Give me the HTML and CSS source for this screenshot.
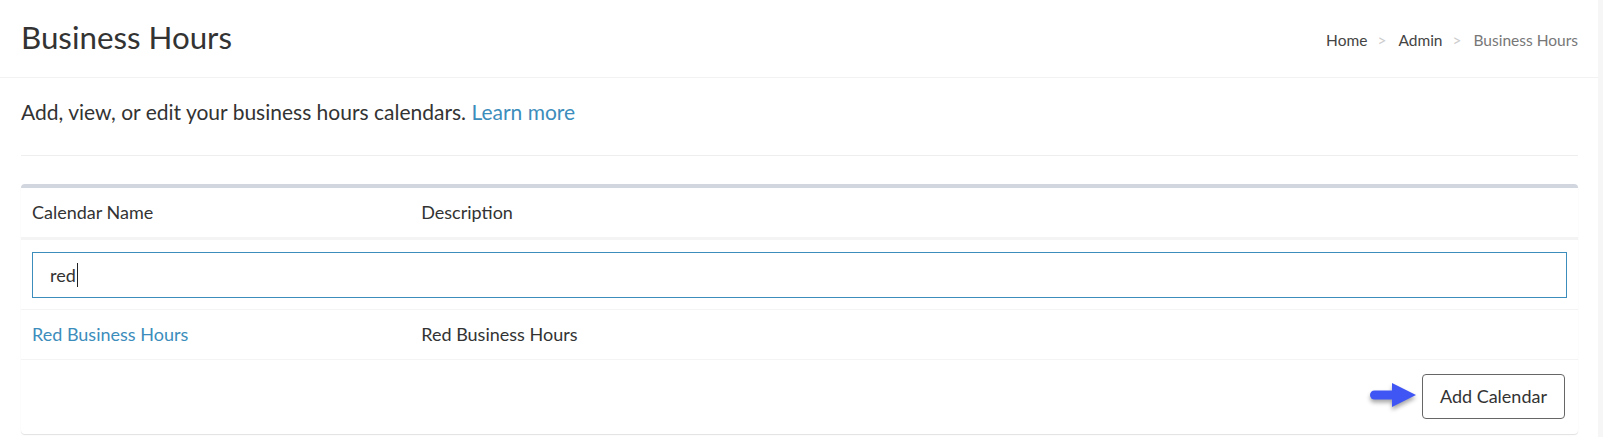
FILE: index.html
```html
<!DOCTYPE html>
<html lang="en">
<head>
<meta charset="utf-8">
<title>Business Hours</title>
<link rel="stylesheet" href="styles.css">
</head>
<body>
<div class="page">
  <div class="main">
    <header class="content-header">
      <h1 class="page-title">Business Hours</h1>
      <ol class="breadcrumb">
        <li class="crumb"><a href="#">Home</a></li>
        <li class="crumb sep-before"><a href="#">Admin</a></li>
        <li class="crumb sep-before active">Business Hours</li>
      </ol>
    </header>
    <section class="content">
      <p class="intro">Add, view, or edit your business hours calendars. <a class="link" href="#">Learn more</a></p>
      <hr class="divider">
      <div class="box">
        <div class="row head-row">
          <div class="cell">Calendar Name</div>
          <div class="cell">Description</div>
        </div>
        <div class="filter-row">
          <div class="fake-input" role="textbox" aria-label="Filter calendars"><span class="typed">red</span><span class="caret"></span></div>
        </div>
        <div class="row data-row">
          <div class="cell"><a class="link" href="#">Red Business Hours</a></div>
          <div class="cell">Red Business Hours</div>
        </div>
        <div class="box-footer">
          <svg class="pointer" width="52" height="32" viewBox="0 0 52 32" aria-hidden="true">
            <rect x="2" y="9.5" width="26" height="9" rx="4.5" fill="#3f56f5"/>
            <polygon points="24,2 48,14 24,26" fill="#3f56f5"/>
          </svg>
          <button class="btn" type="button">Add Calendar</button>
        </div>
      </div>
    </section>
  </div>
  <div class="scroll-strip"></div>
</div>
</body>
</html>
```

FILE: styles.css
```css
html, body {
  margin: 0;
  padding: 0;
  background: #ffffff;
}

body {
  font-family: "Lato", "Liberation Sans", sans-serif;
  color: #333333;
}

.page {
  display: flex;
  min-height: 437px;
}

.main {
  flex: 1;
  min-width: 0;
}

.scroll-strip {
  width: 5px;
  background: #f6f6f6;
}

a {
  text-decoration: none;
}

.link {
  color: #3c8dbc;
}

.content-header {
  display: flex;
  justify-content: space-between;
  align-items: flex-start;
  padding: 20px 20px 23px 21px;
  border-bottom: 1px solid #f2f2f2;
}

.page-title {
  margin: 0;
  font-size: 31.3px;
  line-height: 34px;
  font-weight: 400;
  color: #333333;
}

.breadcrumb {
  display: flex;
  list-style: none;
  margin: 10px 0 0 0;
  padding: 0;
  font-size: 15.5px;
  line-height: 20px;
}

.crumb a {
  color: #444444;
}

.sep-before::before {
  content: ">";
  color: #cccccc;
  padding: 0 12px 0 10px;
}

.crumb.active {
  color: #777777;
}

.content {
  padding: 0 20px 0 21px;
}

.intro {
  margin: 20px 0 29px 0;
  font-size: 21px;
  line-height: 28px;
}

.divider {
  margin: 0;
  border: 0;
  border-top: 1px solid #eeeeee;
}

.box {
  margin-top: 28px;
  border-top: 4px solid #d2d6de;
  border-radius: 4px;
  background: #ffffff;
  box-shadow: 0 1px 1px rgba(0, 0, 0, 0.12);
}

.row {
  display: grid;
  grid-template-columns: 25% 1fr;
  font-size: 18px;
  line-height: 25px;
}

.cell {
  padding: 12px 11px;
}

.head-row {
  border-bottom: 3px solid #f4f4f4;
}

.filter-row {
  padding: 12px 11px 11px 11px;
  border-bottom: 1px solid #f4f4f4;
}

.fake-input {
  display: flex;
  align-items: center;
  height: 44px;
  border: 1px solid #3c8dbc;
  padding: 0 17px;
  font-size: 18px;
  color: #333333;
}

.caret {
  display: inline-block;
  width: 1px;
  height: 24px;
  margin-left: 1px;
  background: #222222;
}

.data-row {
  border-bottom: 1px solid #f4f4f4;
}

.box-footer {
  display: flex;
  justify-content: flex-end;
  align-items: center;
  padding: 14px 13px 15px 11px;
}

.pointer {
  margin-right: 2px;
  filter: drop-shadow(0 3px 2px rgba(0, 0, 0, 0.35));
}

.btn {
  font-family: "Lato", "Liberation Sans", sans-serif;
  font-size: 18px;
  line-height: 25px;
  color: #333333;
  background: #ffffff;
  border: 1px solid #666666;
  border-radius: 4px;
  padding: 9px 17px;
}
```
